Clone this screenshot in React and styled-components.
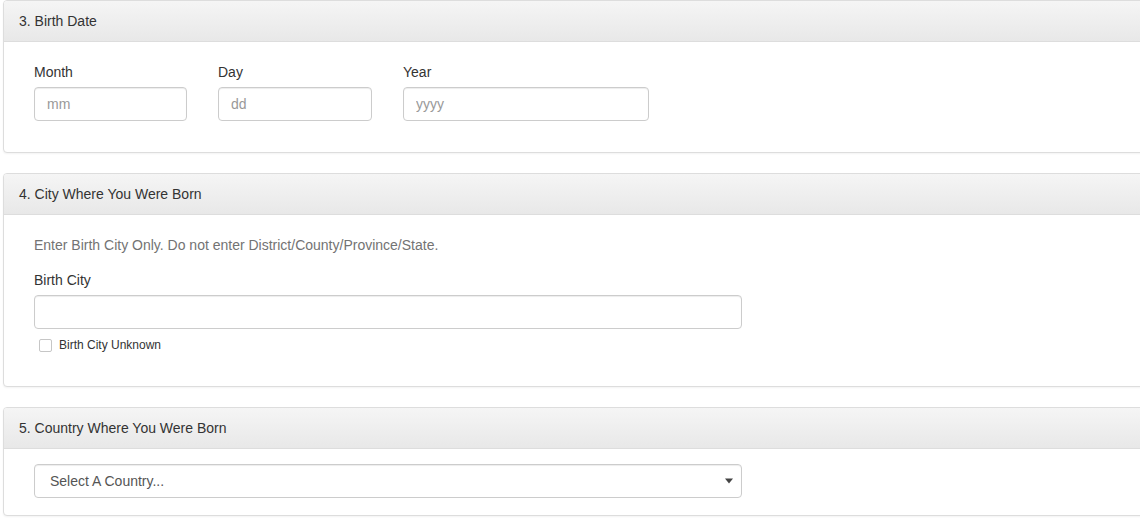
import React from 'react';
import styled, { createGlobalStyle } from 'styled-components';

const GlobalStyle = createGlobalStyle`
    html, body {
        margin: 0;
        padding: 0;
        background: #ffffff;
        overflow: hidden;
    }
    body {
        font-family: "Liberation Sans", Arial, sans-serif;
        font-size: 14px;
        line-height: 20px;
        color: #333333;
    }
    * {
        box-sizing: border-box;
    }
`;

const Page = styled.div`
    padding-left: 3px;
    width: 1170px;
`;

const Panel = styled.section`
    margin-bottom: 20px;
    background: #ffffff;
    border: 1px solid #dddddd;
    border-radius: 4px;
    box-shadow: 0 1px 2px rgba(0, 0, 0, 0.05);
    overflow: hidden;
`;

const PanelHeading = styled.div`
    padding: 10px 15px;
    height: 41px;
    font-size: 14px;
    line-height: 20px;
    color: #333333;
    background: linear-gradient(to bottom, #f5f5f5 0%, #e8e8e8 100%);
    border-bottom: 1px solid #dddddd;
`;

const PanelBody = styled.div`
    padding: ${(props) => (props.extraTop ? '20px' : '15px')} 15px ${(props) => props.bottom || 15}px;
`;

const Row = styled.div`
    display: flex;
    gap: 31px;
    padding-left: 15px;
`;

const Col = styled.div`
    width: ${(props) => props.width}px;
    padding-left: ${(props) => (props.inset ? '15px' : '0')};
    margin-bottom: ${(props) => props.bottom || 15}px;
`;

const Label = styled.label`
    display: block;
    margin-bottom: 5px;
    font-size: 14px;
    line-height: 20px;
    color: #333333;
`;

const Input = styled.input`
    display: block;
    width: 100%;
    height: 34px;
    padding: 6px 12px;
    font-family: inherit;
    font-size: 14px;
    line-height: 20px;
    color: #555555;
    background: #ffffff;
    border: 1px solid #cccccc;
    border-radius: 4px;
    box-shadow: inset 0 1px 1px rgba(0, 0, 0, 0.075);
    outline: none;

    &::placeholder {
        color: #999999;
    }
`;

const HelpText = styled.p`
    margin: 0 0 15px;
    padding-left: 15px;
    color: #737373;
`;

const CheckRow = styled.label`
    display: flex;
    align-items: center;
    margin-top: 6px;
    padding-left: 5px;
    font-size: 12px;
    line-height: 20px;
    color: #333333;
`;

const CheckBox = styled.span`
    width: 13px;
    height: 13px;
    margin-right: 7px;
    border: 1px solid #c6c6c6;
    border-radius: 2px;
    background: #ffffff;
`;

const SelectWrap = styled.div`
    position: relative;
    width: 708px;
    margin-left: 15px;
`;

const Select = styled.select`
    display: block;
    width: 100%;
    height: 34px;
    padding: 6px 12px 6px 15px;
    font-family: inherit;
    font-size: 14px;
    color: #555555;
    background: #ffffff;
    border: 1px solid #cccccc;
    border-radius: 4px;
    box-shadow: inset 0 1px 1px rgba(0, 0, 0, 0.075);
    appearance: none;
    outline: none;
`;

const Caret = styled.svg`
    position: absolute;
    right: 9px;
    top: 14px;
    pointer-events: none;
`;

function DateField({ label, placeholder, width }) {
    return (
        <Col width={width}>
            <Label>{label}</Label>
            <Input placeholder={placeholder} />
        </Col>
    );
}

export default function App() {
    return (
        <Page>
            <GlobalStyle />
            <Panel>
                <PanelHeading>3. Birth Date</PanelHeading>
                <PanelBody extraTop bottom={16}>
                    <Row>
                        <DateField label="Month" placeholder="mm" width={153} />
                        <DateField label="Day" placeholder="dd" width={154} />
                        <DateField label="Year" placeholder="yyyy" width={246} />
                    </Row>
                </PanelBody>
            </Panel>

            <Panel>
                <PanelHeading>4. City Where You Were Born</PanelHeading>
                <PanelBody extraTop>
                    <HelpText>Enter Birth City Only. Do not enter District/County/Province/State.</HelpText>
                    <Col width={723} inset bottom={16}>
                        <Label>Birth City</Label>
                        <Input />
                        <CheckRow>
                            <CheckBox />
                            Birth City Unknown
                        </CheckRow>
                    </Col>
                </PanelBody>
            </Panel>

            <Panel>
                <PanelHeading>5. Country Where You Were Born</PanelHeading>
                <PanelBody bottom={17}>
                    <SelectWrap>
                        <Select defaultValue="">
                            <option value="">Select A Country...</option>
                        </Select>
                        <Caret width="8" height="6" viewBox="0 0 8 6">
                            <path d="M0 0.5H8L4 5.5Z" fill="#444444" />
                        </Caret>
                    </SelectWrap>
                </PanelBody>
            </Panel>
        </Page>
    );
}
